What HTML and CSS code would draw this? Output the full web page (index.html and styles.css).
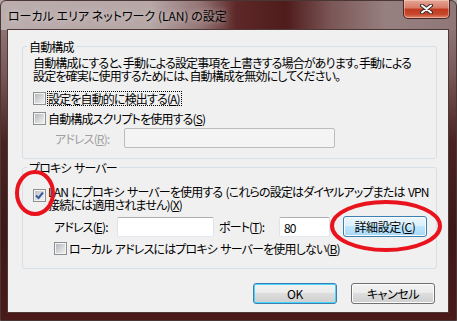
FILE: index.html
```html
<!DOCTYPE html>
<html>
<head>
    <title>ローカル エリア ネットワーク (LAN) の設定</title>
    <link rel="stylesheet" href="styles.css">
</head>
<body>
    <div class="window">
        <div class="titlebar">
            <span class="title">ローカル エリア ネットワーク (LAN) の設定</span>
            <button class="close-btn">
                <svg width="13" height="10" viewBox="0 0 13 10">
                    <path d="M2 1.5 L11 8.5 M11 1.5 L2 8.5" stroke="#3a2a2a" stroke-width="4" stroke-linecap="round"/>
                    <path d="M2 1.5 L11 8.5 M11 1.5 L2 8.5" stroke="#fff" stroke-width="2" stroke-linecap="round"/>
                </svg>
            </button>
        </div>

        <div class="client">
            <fieldset class="group group-auto">
                <legend>自動構成</legend>
                <p class="desc">自動構成にすると、手動による設定事項を上書きする場合があります。手動による<br>設定を確実に使用するためには、自動構成を無効にしてください。</p>
                <label class="check-row row-detect">
                    <span class="checkbox"></span>
                    <span class="focus-label">設定を自動的に検出する(<u>A</u>)</span>
                </label>
                <label class="check-row row-script">
                    <span class="checkbox"></span>
                    <span>自動構成スクリプトを使用する(<u>S</u>)</span>
                </label>
                <div class="field-row row-script-addr">
                    <span class="field-label disabled label-script">アドレス(<u>R</u>):</span>
                    <span class="textbox textbox-disabled box-script"></span>
                </div>
            </fieldset>

            <fieldset class="group group-proxy">
                <legend>プロキシ サーバー</legend>
                <label class="check-row check-multi">
                    <span class="checkbox checked">
                        <svg width="11" height="11" viewBox="0 0 11 11">
                            <path d="M2 5.5 L4.5 8 L9 2.5" fill="none" stroke="#3b5a9e" stroke-width="2"/>
                        </svg>
                    </span>
                    <span>LAN にプロキシ サーバーを使用する (これらの設定はダイヤルアップまたは VPN<br>接続には適用されません)(<u>X</u>)</span>
                </label>
                <div class="field-row row-proxy-addr">
                    <span class="field-label label-proxy">アドレス(<u>E</u>):</span>
                    <span class="textbox box-proxy"></span>
                    <span class="field-label label-port">ポート(<u>T</u>):</span>
                    <span class="textbox box-port">80</span>
                    <button class="btn btn-hot">詳細設定(<u>C</u>)</button>
                </div>
                <label class="check-row row-bypass">
                    <span class="checkbox"></span>
                    <span>ローカル アドレスにはプロキシ サーバーを使用しない(<u>B</u>)</span>
                </label>
            </fieldset>

            <div class="actions">
                <button class="btn btn-default">OK</button>
                <button class="btn">キャンセル</button>
            </div>
        </div>

        <!-- red marks drawn over the screenshot -->
        <svg class="marks" width="457" height="321" viewBox="0 0 457 321">
            <ellipse cx="35" cy="193" rx="18" ry="21" fill="none" stroke="#e8131c" stroke-width="4"/>
            <ellipse cx="386" cy="226" rx="54" ry="24" fill="none" stroke="#e8131c" stroke-width="4"/>
        </svg>
    </div>
</body>
</html>
```

FILE: styles.css
```css
body { margin: 0; background: #b3a3a3; font-family: "Noto Sans CJK JP", sans-serif; font-size: 12px; font-feature-settings: "palt"; color: #000; }
u { text-decoration: underline; text-underline-offset: 1px; }

.window {
    position: relative;
    width: 457px; height: 321px; box-sizing: border-box;
    border: 1px solid #4b3636; border-radius: 6px 6px 0 0;
    padding: 0 7px 7px 6px;
    display: flex; flex-direction: column;
    background:
        linear-gradient(90deg, #bcaeae 0px, #b6a6a6 150px, #937474 200px, #5e2828 235px, #4f1b1b 285px, #7b5656 330px, #978080 385px, #8f7777 457px) 0 0 / 100% 29px no-repeat,
        linear-gradient(180deg, #9c8686 0px, #7a5a5a 70px, #4a2222 140px, #3e1818 230px, #4b1a1a 321px);
}

.titlebar { height: 28px; display: flex; align-items: flex-start; }
.title { margin: 8px 0 0 1px; line-height: 13px; text-shadow: 0 0 6px rgba(255,255,255,0.7); }
.close-btn {
    margin: -1px -1px 0 auto; width: 47px; height: 19px; padding: 0;
    border: 1px solid #4a2626; border-top: none; border-radius: 0 0 5px 5px;
    background: linear-gradient(180deg, #e6a796 0%, #d77a66 45%, #c0391f 50%, #c8482c 80%, #e08b6c 100%);
    box-shadow: inset 0 0 0 1px rgba(255,220,210,0.45);
    display: flex; align-items: center; justify-content: center;
}

.client {
    flex: 1; box-sizing: border-box;
    background: #f0f0f0; border: 1px solid #4e3838;
    display: flex; flex-direction: column;
    letter-spacing: -0.85px; word-spacing: 1.5px;
}

.group {
    margin: 10px 11px 0 14px; padding: 3px 9px 10px 10px;
    border: 1px solid #d5dfe5; border-radius: 3px; min-width: 0;
}
.group legend { padding: 0 2px; margin-left: -6px; line-height: 13px; }
.group-proxy { margin-top: 2px; padding-top: 11px; padding-bottom: 12px; }

.desc { margin: 0; line-height: 13px; white-space: nowrap; }

.check-row { display: flex; align-items: center; height: 16px; line-height: 13px; white-space: nowrap; }
.check-row .checkbox { margin-right: 2px; }
.row-detect { margin-top: 8px; }
.row-script { margin-top: 4px; }
.check-multi { align-items: flex-start; height: auto; }
.check-multi .checkbox { margin-top: 4px; }
.row-bypass { margin-top: 3px; margin-left: 21px; }

.checkbox {
    width: 13px; height: 13px; box-sizing: border-box; flex: none;
    border: 1px solid #8e8f8f;
    background: linear-gradient(135deg, #aeb2b8 0%, #d6d8db 55%, #f4f4f4 100%);
    box-shadow: inset 0 0 0 1px #f4f4f4;
    display: flex; align-items: center; justify-content: center;
}
.checkbox.checked { background: linear-gradient(135deg, #b8bcc2 0%, #e0e2e4 60%, #f6f6f6 100%); }
.focus-label { outline: 1px dotted #000; outline-offset: 0; padding-right: 1px; }

.field-row { display: flex; align-items: center; line-height: 13px; white-space: nowrap; }
.row-script-addr { margin-top: 2px; padding-left: 22px; }
.row-proxy-addr { margin-top: 5px; padding-left: 21px; }
.field-label { flex: none; }
.disabled { color: #a0a0a0; }
.label-script { width: 69px; }
.label-proxy { width: 63px; }
.label-port { width: 60px; margin-left: 5px; }

.textbox {
    height: 20px; box-sizing: border-box; padding: 3px 4px;
    background: #fff; border: 1px solid #abadb3; border-color: #abadb3 #e2e3ea #e3e9ef #e2e3ea;
    border-radius: 2px;
}
.textbox-disabled { background: #f4f4f4; border-color: #bcbcbc; }
.box-script { width: 211px; }
.box-proxy { width: 97px; }
.box-port { width: 51px; }

.btn {
    width: 84px; height: 21px; padding: 0; box-sizing: border-box;
    font: inherit; font-feature-settings: "palt"; line-height: 13px; letter-spacing: -0.4px;
    border: 1px solid #707070; border-radius: 3px;
    background: linear-gradient(180deg, #f2f2f2 0%, #ebebeb 49%, #dddddd 50%, #cfcfcf 100%);
    box-shadow: inset 0 0 0 1px #fcfcfc;
}
.btn-hot {
    margin-left: 13px;
    border-color: #3c7fb1;
    background: linear-gradient(180deg, #eaf6fd 0%, #d9f0fc 49%, #bee6fd 50%, #a7d9f5 100%);
}
.btn-default { border-color: #3c7fb1; box-shadow: inset 0 0 0 1px #48d5fd; }

.actions { display: flex; justify-content: flex-end; gap: 14px; margin: 14px 13px 0 0; }

.marks { position: absolute; left: -1px; top: -1px; pointer-events: none; }
```
